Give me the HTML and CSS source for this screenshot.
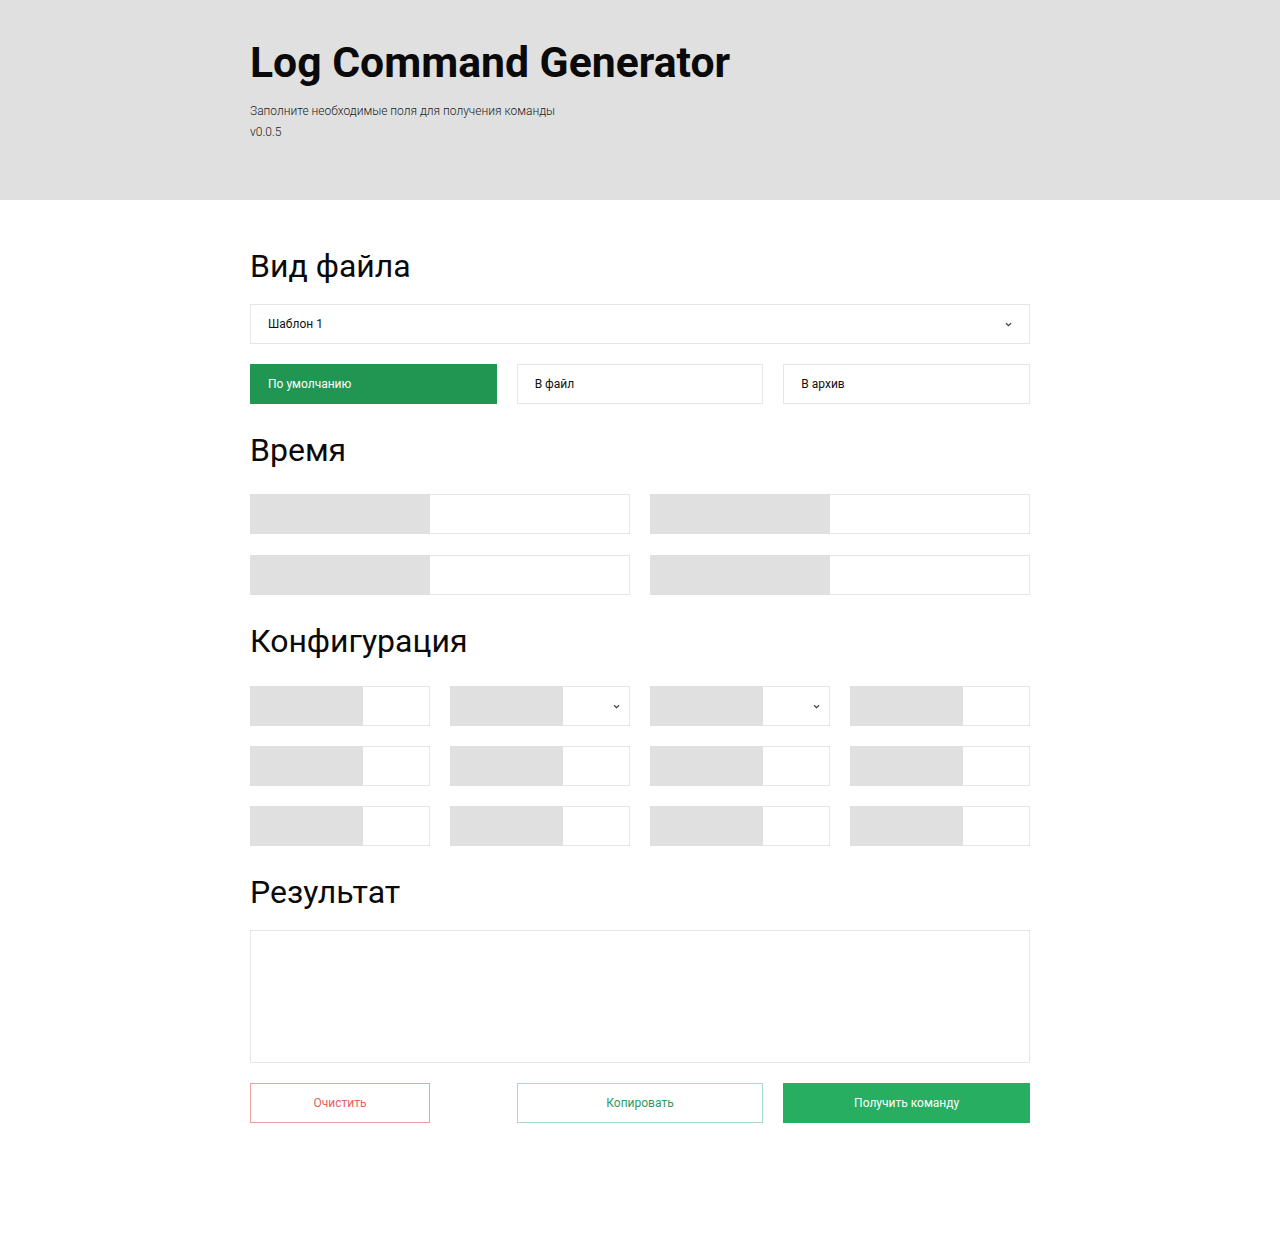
FILE: index.html
```html
<!DOCTYPE html>
<html lang="ru">
<head>
<meta charset="utf-8">
<title>Log Command Generator</title>
<link rel="stylesheet" href="styles.css">
</head>
<body>
<header class="header">
  <div class="container">
    <h1 class="title">Log Command Generator</h1>
    <p class="subtitle">Заполните необходимые поля для получения команды</p>
    <p class="subtitle">v0.0.5</p>
  </div>
</header>
<main class="container main">
  <section class="section section-first">
    <h2 class="section-title">Вид файла</h2>
    <div class="select">
      <span>Шаблон 1</span>
      <svg class="chevron" width="7" height="5" viewBox="0 0 7 5"><path d="M1 1.2 L3.5 3.6 L6 1.2" fill="none" stroke="#444" stroke-width="1.3"/></svg>
    </div>
    <div class="row3">
      <div class="opt opt-active">По умолчанию</div>
      <div class="opt">В файл</div>
      <div class="opt">В архив</div>
    </div>
  </section>

  <section class="section">
    <h2 class="section-title">Время</h2>
    <div class="grid2">
      <div class="field field-time"><div class="label"></div><div class="input"></div></div>
      <div class="field field-time"><div class="label"></div><div class="input"></div></div>
      <div class="field field-time"><div class="label"></div><div class="input"></div></div>
      <div class="field field-time"><div class="label"></div><div class="input"></div></div>
    </div>
  </section>

  <section class="section">
    <h2 class="section-title section-title-cfg">Конфигурация</h2>
    <div class="grid4">
      <div class="field field-cfg"><div class="label"></div><div class="input"></div></div>
      <div class="field field-cfg"><div class="label"></div><div class="input input-select"><svg class="chevron" width="7" height="5" viewBox="0 0 7 5"><path d="M1 1.2 L3.5 3.6 L6 1.2" fill="none" stroke="#444" stroke-width="1.3"/></svg></div></div>
      <div class="field field-cfg"><div class="label"></div><div class="input input-select"><svg class="chevron" width="7" height="5" viewBox="0 0 7 5"><path d="M1 1.2 L3.5 3.6 L6 1.2" fill="none" stroke="#444" stroke-width="1.3"/></svg></div></div>
      <div class="field field-cfg"><div class="label"></div><div class="input"></div></div>
      <div class="field field-cfg"><div class="label"></div><div class="input"></div></div>
      <div class="field field-cfg"><div class="label"></div><div class="input"></div></div>
      <div class="field field-cfg"><div class="label"></div><div class="input"></div></div>
      <div class="field field-cfg"><div class="label"></div><div class="input"></div></div>
      <div class="field field-cfg"><div class="label"></div><div class="input"></div></div>
      <div class="field field-cfg"><div class="label"></div><div class="input"></div></div>
      <div class="field field-cfg"><div class="label"></div><div class="input"></div></div>
      <div class="field field-cfg"><div class="label"></div><div class="input"></div></div>
    </div>
  </section>

  <section class="section">
    <h2 class="section-title">Результат</h2>
    <div class="result"></div>
    <div class="row3 actions">
      <button class="btn btn-clear">Очистить</button>
      <button class="btn btn-copy">Копировать</button>
      <button class="btn btn-get">Получить команду</button>
    </div>
  </section>
</main>
</body>
</html>
```

FILE: styles.css
```css
* { box-sizing: border-box; }
html, body { margin: 0; padding: 0; }
body {
  font-family: Roboto, "Noto Sans", Arial, sans-serif;
  color: #111;
  background: #fff;
}
.container {
  width: 780px;
  margin: 0 auto;
}
.header {
  background: #e0e0e0;
  height: 200px;
  padding-top: 38px;
}
.title {
  margin: 0 0 14px;
  font-size: 42.7px;
  font-weight: 700;
  line-height: 49px;
  color: #0a0a0a;
}
.subtitle {
  margin: 0;
  font-size: 12px;
  font-weight: 300;
  line-height: 21px;
  color: #222;
}
.section-first { padding-top: 20px; }
.section-title {
  margin: 27px 0 25px;
  font-size: 32px;
  font-weight: 400;
  line-height: 38px;
  color: #0a0a0a;
}
.section-first .section-title { margin-bottom: 19px; }
.section-title-cfg { margin-bottom: 26px; }
.select {
  height: 40px;
  border: 1px solid #e6e6e6;
  display: flex;
  align-items: center;
  justify-content: space-between;
  padding: 0 17px 0 17px;
  font-size: 12px;
  margin-bottom: 20px;
}
.row3 {
  display: grid;
  grid-template-columns: repeat(3, 1fr);
  gap: 20px;
}
.opt {
  height: 40px;
  border: 1px solid #e6e6e6;
  display: flex;
  align-items: center;
  padding-left: 17px;
  font-size: 12px;
  color: #111;
}
.opt-active {
  background: #219653;
  border-color: #219653;
  color: #fff;
}
.grid2 {
  display: grid;
  grid-template-columns: repeat(2, 1fr);
  column-gap: 20px;
  row-gap: 21px;
}
.grid4 {
  display: grid;
  grid-template-columns: repeat(4, 1fr);
  gap: 20px;
}
.field {
  height: 40px;
  display: flex;
}
.label {
  background: #e0e0e0;
  height: 100%;
}
.field-time .label { width: 180px; }
.field-cfg .label { width: 113px; }
.input {
  flex: 1;
  height: 100%;
  border: 1px solid #e6e6e6;
  border-left: none;
  background: #fff;
}
.input-select {
  display: flex;
  align-items: center;
  justify-content: flex-end;
  padding-right: 9px;
}
.chevron { display: block; }
.result {
  height: 133px;
  border: 1px solid #e6e6e6;
  margin-top: -6px;
}
.actions { margin-top: 20px; }
.btn {
  height: 40px;
  font-family: inherit;
  font-size: 12px;
  background: #fff;
  cursor: pointer;
  padding: 0;
}
.btn-clear {
  width: 180px;
  border: 1px solid #eea0a0;
  color: #e86060;
}
.btn-copy {
  border: 1px solid #a6dcc6;
  color: #2f9a60;
}
.btn-get {
  border: 1px solid #27ae60;
  background: #27ae60;
  color: #fff;
}
```
